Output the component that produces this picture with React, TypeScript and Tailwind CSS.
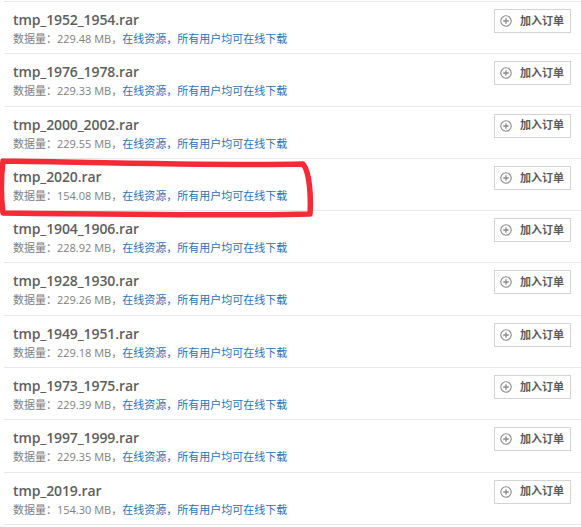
import React from 'react';

const files = [
  { name: 'tmp_1952_1954.rar', size: '229.48' },
  { name: 'tmp_1976_1978.rar', size: '229.33' },
  { name: 'tmp_2000_2002.rar', size: '229.55' },
  { name: 'tmp_2020.rar', size: '154.08' },
  { name: 'tmp_1904_1906.rar', size: '228.92' },
  { name: 'tmp_1928_1930.rar', size: '229.26' },
  { name: 'tmp_1949_1951.rar', size: '229.18' },
  { name: 'tmp_1973_1975.rar', size: '229.39' },
  { name: 'tmp_1997_1999.rar', size: '229.35' },
  { name: 'tmp_2019.rar', size: '154.30' },
];

function PlusCircle() {
  return (
    <svg width="12" height="12" viewBox="0 0 12 12" className="shrink-0">
      <circle cx="6" cy="6" r="5.2" fill="none" stroke="#8a8a8a" strokeWidth="1.1" />
      <path d="M6 3.2v5.6M3.2 6h5.6" stroke="#8a8a8a" strokeWidth="1.3" />
    </svg>
  );
}

export default function App() {
  return (
    <div className="relative min-h-[527px] bg-white pl-[4px] pt-[1px] font-['Open_Sans','Noto_Sans_CJK_SC',sans-serif]">
      <ul className="border-t border-[#e8e8e8]">
        {files.map((f) => (
          <li
            key={f.name}
            className="flex h-[52.3px] items-start justify-between border-b border-[#e8e8e8] pl-[9px] pr-[10px] pt-[7px]"
          >
            <div className="pt-[1px]">
              <div className="text-[14px] font-semibold leading-[20px] tracking-[-0.1px] text-[#5e5e5e]">{f.name}</div>
              <div className="text-[11px] leading-[18px] text-[#808080]">
                数据量：{f.size} MB，
                <span className="text-[#2a72b5]">在线资源，所有用户均可在线下载</span>
              </div>
            </div>
            <button
              type="button"
              className="flex h-[24px] w-[77px] items-center gap-[8px] border border-[#d4d4d4] bg-white pl-[5px] text-[11px] font-semibold text-[#5a5a5a]"
            >
              <PlusCircle />
              加入订单
            </button>
          </li>
        ))}
      </ul>
      <svg
        className="pointer-events-none absolute left-0 top-0"
        width="581"
        height="527"
        viewBox="0 0 581 527"
      >
        <path
          d="M3 161 C 80 162, 220 166, 303 164 C 310 172, 311 198, 310 214 C 240 216, 80 214, 3 213 C 1 198, 1 178, 3 161"
          fill="none"
          stroke="#f42a36"
          strokeWidth="5.5"
          strokeLinecap="round"
          strokeLinejoin="round"
        />
      </svg>
    </div>
  );
}
